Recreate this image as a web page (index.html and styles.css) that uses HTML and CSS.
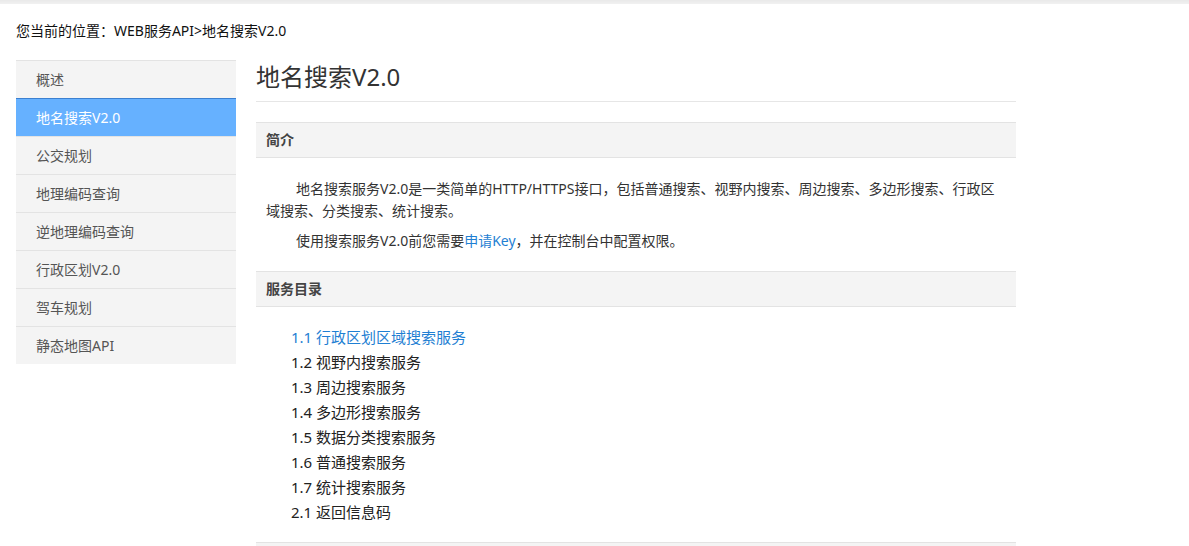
FILE: index.html
```html
<!DOCTYPE html>
<html lang="zh-CN">
<head>
<meta charset="utf-8">
<title>地名搜索V2.0</title>
<link rel="stylesheet" href="styles.css">
</head>
<body>
<div class="topbar"></div>
<div class="crumb">您当前的位置：WEB服务API&gt;地名搜索V2.0</div>
<div class="layout">
  <ul class="sidenav">
    <li class="nav-item">概述</li>
    <li class="nav-item active">地名搜索V2.0</li>
    <li class="nav-item">公交规划</li>
    <li class="nav-item">地理编码查询</li>
    <li class="nav-item">逆地理编码查询</li>
    <li class="nav-item">行政区划V2.0</li>
    <li class="nav-item">驾车规划</li>
    <li class="nav-item">静态地图API</li>
  </ul>
  <div class="content">
    <h1 class="title">地名搜索V2.0</h1>
    <div class="sec-head">简介</div>
    <p class="para">地名搜索服务V2.0是一类简单的HTTP/HTTPS接口，包括普通搜索、视野内搜索、周边搜索、多边形搜索、行政区域搜索、分类搜索、统计搜索。</p>
    <p class="para para-2">使用搜索服务V2.0前您需要<a class="link" href="#">申请Key</a>，并在控制台中配置权限。</p>
    <div class="sec-head sec-head-2">服务目录</div>
    <ul class="toc">
      <li class="toc-item"><a class="link" href="#">1.1 行政区划区域搜索服务</a></li>
      <li class="toc-item">1.2 视野内搜索服务</li>
      <li class="toc-item">1.3 周边搜索服务</li>
      <li class="toc-item">1.4 多边形搜索服务</li>
      <li class="toc-item">1.5 数据分类搜索服务</li>
      <li class="toc-item">1.6 普通搜索服务</li>
      <li class="toc-item">1.7 统计搜索服务</li>
      <li class="toc-item">2.1 返回信息码</li>
    </ul>
    <div class="sec-head sec-head-3"></div>
  </div>
</div>
</body>
</html>
```
FILE: styles.css
```css
html, body {
  margin: 0;
  padding: 0;
  background: #fff;
}
body {
  font-family: "Noto Sans", "Noto Sans CJK SC", sans-serif;
  font-size: 14px;
  color: #333;
  overflow: hidden;
}
.topbar {
  height: 4px;
  background: linear-gradient(#e9e9e9, #f1f1f1);
}
.crumb {
  margin: 17px 0 0 16px;
  line-height: 20px;
  font-size: 14px;
  color: #111;
}
.layout {
  display: flex;
  align-items: flex-start;
  margin-top: 19px;
  padding-left: 16px;
}
.sidenav {
  list-style: none;
  margin: 0;
  padding: 0;
  width: 220px;
  flex: none;
  background: #f4f4f4;
}
.nav-item {
  height: 37px;
  line-height: 37px;
  border-top: 1px solid #e3e3e3;
  padding-left: 20px;
  color: #555;
  font-size: 14px;
}
.nav-item.active {
  background: #66b1ff;
  border-top-color: #3c80d0;
  color: #fff;
}
.content {
  width: 760px;
  margin-left: 20px;
  flex: none;
}
.title {
  margin: 0;
  font-size: 24px;
  font-weight: normal;
  line-height: 34px;
  padding-bottom: 7px;
  border-bottom: 1px solid #e6e6e6;
  color: #333;
}
.sec-head {
  margin-top: 20px;
  height: 34px;
  line-height: 34px;
  padding-left: 10px;
  background: #f4f4f4;
  border-top: 1px solid #e3e3e3;
  border-bottom: 1px solid #e3e3e3;
  font-weight: bold;
  font-size: 14px;
  color: #444;
}
.sec-head-2 {
  margin-top: 19px;
}
.sec-head-3 {
  margin-top: 17px;
}
.para {
  margin: 20px 0 0;
  padding: 0 10px;
  text-indent: 30px;
  line-height: 22px;
  font-size: 14px;
  color: #333;
}
.para-2 {
  margin-top: 8px;
}
.link {
  color: #1f7fd3;
  text-decoration: none;
}
.toc {
  list-style: none;
  margin: 18px 0 0;
  padding: 0 0 0 35px;
}
.toc-item {
  line-height: 25px;
  font-size: 15px;
  color: #222;
}
```
